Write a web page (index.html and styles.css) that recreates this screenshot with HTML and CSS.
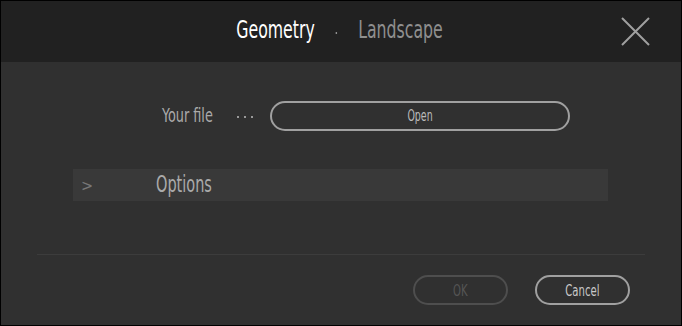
FILE: index.html
```html
<!DOCTYPE html>
<html lang="en">
<head>
<meta charset="UTF-8">
<meta name="viewport" content="width=device-width, initial-scale=1.0">
<title>Geometry - Landscape</title>
<link rel="stylesheet" href="styles.css">
</head>
<body>

<div id="dialog">
  <div class="header">
    <div></div>
    <h2 class="title">
      <span class="tab active">Geometry</span>
      <span class="sep"></span>
      <span class="tab">Landscape</span>
    </h2>
    <button type="button" class="close" aria-label="Close">
      <svg width="29" height="29" viewBox="0 0 29 29">
        <path d="M1 1 L28 28 M28 1 L1 28" stroke="#a0a0a0" stroke-width="2" fill="none"/>
      </svg>
    </button>
  </div>

  <div class="content">
    <div class="file-row">
      <span class="label">Your file</span>
      <span class="dots"><i></i><i></i><i></i></span>
      <button type="button" class="pill open"><span class="cn">Open</span></button>
    </div>

    <div class="options">
      <span class="arrow">&gt;</span>
      <span class="options-label">Options</span>
    </div>
  </div>

  <div class="footer">
    <button type="button" class="pill ok" disabled><span class="cn">OK</span></button>
    <button type="button" class="pill"><span class="cn">Cancel</span></button>
  </div>
</div>

</body>
</html>
```

FILE: styles.css
```css
body {
  margin: 0;
  padding: 0;
  background-color: #000;
  font-family: "DejaVu Sans Condensed", "DejaVu Sans", sans-serif;
}
#dialog {
  width: 682px;
  height: 326px;
  box-sizing: border-box;
  border: 1px solid #000;
  background-color: #303030;
  display: flex;
  flex-direction: column;
}
/* the dialog font is very narrow, squeeze the text horizontally */
.cn {
  display: inline-block;
  transform: scaleX(0.7);
}
.header {
  height: 61px;
  background-color: #212121;
  display: grid;
  grid-template-columns: 1fr auto 1fr;
  align-items: center;
}
.title {
  margin: 0 4px 5px 0;
  font-weight: normal;
  font-size: 25px;
  display: flex;
  align-items: center;
  gap: 30px;
  color: #8f8f8f;
  transform: scaleX(0.7);
}
.tab.active {
  color: #fff;
}
.sep {
  width: 2px;
  height: 2px;
  margin-top: 8px;
  background-color: #8f8f8f;
}
.close {
  justify-self: end;
  margin-right: 31px;
  background: none;
  border: none;
  padding: 0;
  display: flex;
  cursor: pointer;
}
.content {
  flex: 1;
}
.file-row {
  display: flex;
  align-items: center;
  margin: 39px 0 0 161px;
}
.label {
  color: #aaa;
  font-size: 19px;
  width: 75px;
  transform: scaleX(0.75);
  transform-origin: left center;
  margin-top: -2px;
}
.dots {
  width: 33px;
  display: flex;
  gap: 5px;
  margin-top: 1px;
}
.dots i {
  width: 2px;
  height: 2px;
  background-color: #999;
}
.pill {
  height: 30px;
  width: 95px;
  border: 2px solid #a0a0a0;
  border-radius: 15px;
  background: transparent;
  color: #c8c8c8;
  font-family: inherit;
  font-size: 16px;
  padding: 0;
  cursor: pointer;
}
.pill.open {
  width: 300px;
  font-size: 15px;
  color: #bbb;
}
.pill.ok {
  border-color: #4e4e4e;
  color: #555;
  cursor: default;
}
.options {
  margin: 38px 73px 0 72px;
  height: 32px;
  background-color: #393939;
  display: flex;
  align-items: center;
  color: #aaa;
}
.arrow {
  width: 75px;
  padding-left: 8px;
  color: #777;
  font-size: 16px;
}
.options-label {
  font-size: 23px;
  transform: scaleX(0.7);
  transform-origin: left center;
  margin-top: -2px;
}
.footer {
  margin: 0 36px;
  border-top: 1px solid #3c3c3c;
  height: 70px;
  display: flex;
  justify-content: flex-end;
  align-items: center;
  gap: 27px;
  padding-right: 15px;
}
```
